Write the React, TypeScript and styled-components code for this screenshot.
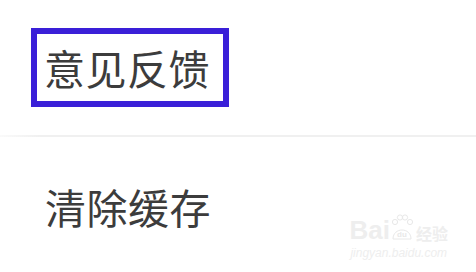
import React from 'react';
import styled, { createGlobalStyle } from 'styled-components';

const GlobalStyle = createGlobalStyle`
  html, body {
    margin: 0;
    padding: 0;
    background: #ffffff;
  }
  body {
    font-family: "Noto Sans CJK SC", "Noto Sans", sans-serif;
  }
`;

const Page = styled.div`
  position: relative;
  width: 476px;
  height: 272px;
  overflow: hidden;
  background: #ffffff;
`;

const Row = styled.div<{ $height: number }>`
  display: flex;
  align-items: center;
  height: ${(p) => p.$height}px;
  padding-left: 31px;
  box-sizing: border-box;
`;

const Divider = styled.div`
  height: 2px;
  background: linear-gradient(to right, #fafafa 0, #f0f0f0 40px, #f0f0f0 100%);
`;

const Label = styled.span<{ $marked?: boolean }>`
  display: inline-block;
  font-size: 41px;
  line-height: 54px;
  color: #3c3c3c;
  letter-spacing: 0.5px;
  padding: ${(p) => (p.$marked ? '6px 13px 7px 7px' : '0 0 0 14px')};
  border: ${(p) => (p.$marked ? '6px solid #3a1fd8' : 'none')};
`;

const Watermark = styled.div`
  position: absolute;
  right: 28px;
  bottom: 12px;
  display: flex;
  flex-direction: column;
  align-items: center;
  color: #eeeeee;
  font-family: "Liberation Sans", sans-serif;
`;

const Brand = styled.div`
  display: flex;
  align-items: flex-end;
  font-size: 26px;
  font-weight: bold;
  line-height: 24px;
`;

const BrandCn = styled.span`
  font-size: 16px;
  line-height: 18px;
  margin-left: 2px;
  font-family: "Noto Sans CJK SC", sans-serif;
`;

const Site = styled.div`
  font-size: 12px;
  font-style: italic;
  margin-top: 4px;
`;

export default function App() {
  return (
    <Page>
      <GlobalStyle />
      <Row $height={135}>
        <Label $marked>意见反馈</Label>
      </Row>
      <Divider />
      <Row $height={138}>
        <Label>清除缓存</Label>
      </Row>
      <Watermark>
        <Brand>
          Bai
          <svg width="24" height="28" viewBox="0 0 24 28">
            <circle cx="5" cy="8" r="2.6" fill="none" stroke="#e8e8e8" />
            <circle cx="10" cy="3.5" r="2.6" fill="none" stroke="#e8e8e8" />
            <circle cx="15" cy="3.5" r="2.6" fill="none" stroke="#e8e8e8" />
            <circle cx="20" cy="8" r="2.6" fill="none" stroke="#e8e8e8" />
            <path d="M3 25 C3 13 21 13 21 25 Z" fill="none" stroke="#e8e8e8" />
            <text x="12" y="23" fontSize="8" textAnchor="middle" fill="#e8e8e8">du</text>
          </svg>
          <BrandCn>经验</BrandCn>
        </Brand>
        <Site>jingyan.baidu.com</Site>
      </Watermark>
    </Page>
  );
}
